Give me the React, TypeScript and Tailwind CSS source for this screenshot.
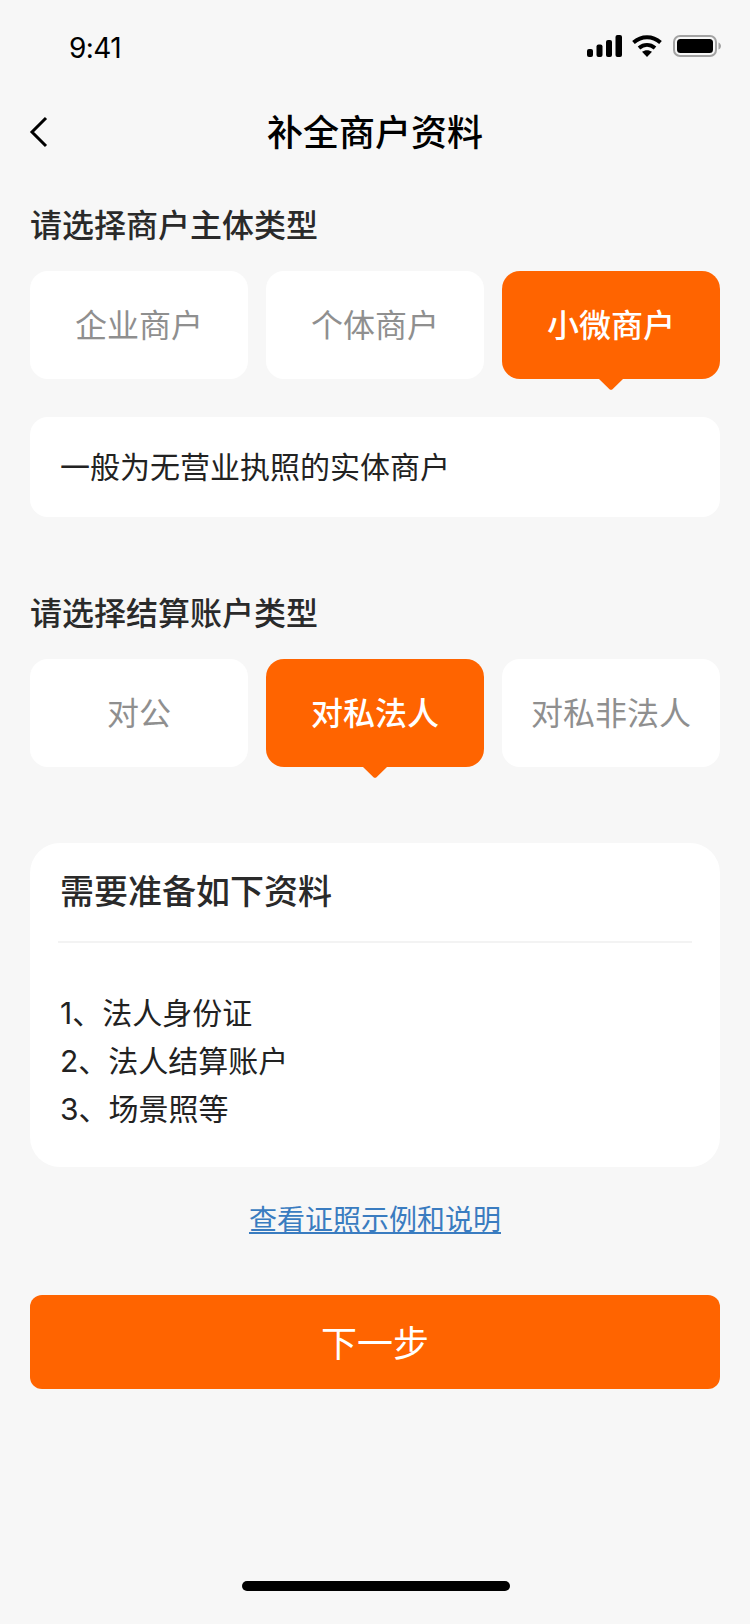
import React from 'react';

const font = { fontFamily: '"Noto Sans CJK SC", sans-serif' };

const Tab = ({ label, active }: { label: string; active?: boolean }) => (
  <div
    className={
      active
        ? 'relative flex h-[108px] items-center justify-center rounded-[18px] bg-[#ff6400] pb-[4px] text-[32px] font-medium text-white'
        : 'flex h-[108px] items-center justify-center rounded-[18px] bg-white pb-[4px] text-[32px] text-[#8f8f8f]'
    }
  >
    {label}
    {active && (
      <svg className="absolute left-1/2 top-full -ml-[12px]" width="24" height="11" viewBox="0 0 24 11">
        <path d="M0 0H24L13.5 10.2C12.7 11 11.3 11 10.5 10.2Z" fill="#ff6400" />
      </svg>
    )}
  </div>
);

const SectionTitle = ({ children }: { children: React.ReactNode }) => (
  <h2 className="text-[32px] font-medium leading-[44px] text-[#2a2a2a]">{children}</h2>
);

export default function App() {
  return (
    <div className="flex h-[1624px] w-[750px] flex-col overflow-hidden bg-[#f7f7f7]" style={font}>
      {/* status bar */}
      <div className="flex h-[88px] items-center justify-between pl-[69px] pr-[29px] pt-[4px]">
        <span className="mt-[4px] text-[28px] leading-none tracking-[-0.6px] text-black" style={{ fontFamily: 'Inter, sans-serif' }}>
          9:41
        </span>
        <div className="flex items-center gap-[10px]">
          <svg width="35" height="22" viewBox="0 0 35 22" fill="#000">
            <rect x="0" y="14" width="6" height="8" rx="2" />
            <rect x="9.500" y="9.500" width="6" height="12.500" rx="2" />
            <rect x="19" y="5" width="6" height="17" rx="2" />
            <rect x="28.500" y="0" width="6.500" height="22" rx="2" />
          </svg>
          <svg width="30" height="22" viewBox="0 0 30 22" fill="none" stroke="#000" strokeWidth="4">
            <path d="M1.500 7.500C9.500 0.500 20.500 0.500 28.500 7.500" />
            <path d="M7 13C12 9 18 9 23 13" />
            <path d="M15 22L10 16.800C13 14.600 17 14.600 20 16.800Z" fill="#000" stroke="none" />
          </svg>
          <svg className="ml-[1px]" width="48" height="22" viewBox="0 0 48 22" fill="none">
            <rect x="1" y="1" width="42" height="20" rx="6" stroke="#a3a3a3" strokeWidth="2" />
            <rect x="4" y="4" width="36" height="14" rx="3.500" fill="#000" />
            <path d="M45.500 7.500C47 8 48 9.500 48 11C48 12.500 47 14 45.500 14.500Z" fill="#a3a3a3" />
          </svg>
        </div>
      </div>

      {/* nav */}
      <div className="relative flex h-[88px] items-center justify-center pb-[4px]">
        <svg className="absolute left-[29px] top-[28px]" width="20" height="32" viewBox="0 0 20 32" fill="none" stroke="#000" strokeWidth="3">
          <path d="M17 2L3 16L17 30" />
        </svg>
        <h1 className="text-[36px] font-medium leading-none text-black">补全商户资料</h1>
      </div>

      <main className="flex flex-col px-[30px]">
        <div className="mt-[25px]">
          <SectionTitle>请选择商户主体类型</SectionTitle>
        </div>
        <div className="mt-[26px] grid grid-cols-3 gap-[18px]">
          <Tab label="企业商户" />
          <Tab label="个体商户" />
          <Tab label="小微商户" active />
        </div>
        <div className="mt-[38px] flex h-[100px] items-center rounded-[18px] bg-white px-[30px] pb-[4px] text-[30px] text-[#222222]">
          一般为无营业执照的实体商户
        </div>

        <div className="mt-[72px]">
          <SectionTitle>请选择结算账户类型</SectionTitle>
        </div>
        <div className="mt-[26px] grid grid-cols-3 gap-[18px]">
          <Tab label="对公" />
          <Tab label="对私法人" active />
          <Tab label="对私非法人" />
        </div>

        {/* required documents */}
        <section className="mt-[76px] h-[324px] rounded-[30px] bg-white px-[28px]">
          <div className="flex h-[100px] items-center border-b-2 border-[#f3f3f3] px-[2px] pb-[6px] text-[34px] font-medium text-[#2a2a2a]">
            需要准备如下资料
          </div>
          <div
            className="mt-[46px] px-[2px] text-[30px] leading-[48px] text-[#222222]"
            style={{ fontFamily: 'Inter, "Noto Sans CJK SC", sans-serif' }}
          >
            <p>1、法人身份证</p>
            <p>2、法人结算账户</p>
            <p>3、场景照等</p>
          </div>
        </section>

        <a className="mt-[31px] self-center text-[28px] leading-[40px] text-[#3a7cc0] underline">查看证照示例和说明</a>

        <button className="mt-[57px] flex h-[94px] items-center justify-center rounded-[12px] bg-[#ff6400] pb-[2px] text-[36px] text-white">
          下一步
        </button>
      </main>

      <div className="mb-[33px] ml-[242px] mt-auto h-[10px] w-[268px] rounded-full bg-black" />
    </div>
  );
}
